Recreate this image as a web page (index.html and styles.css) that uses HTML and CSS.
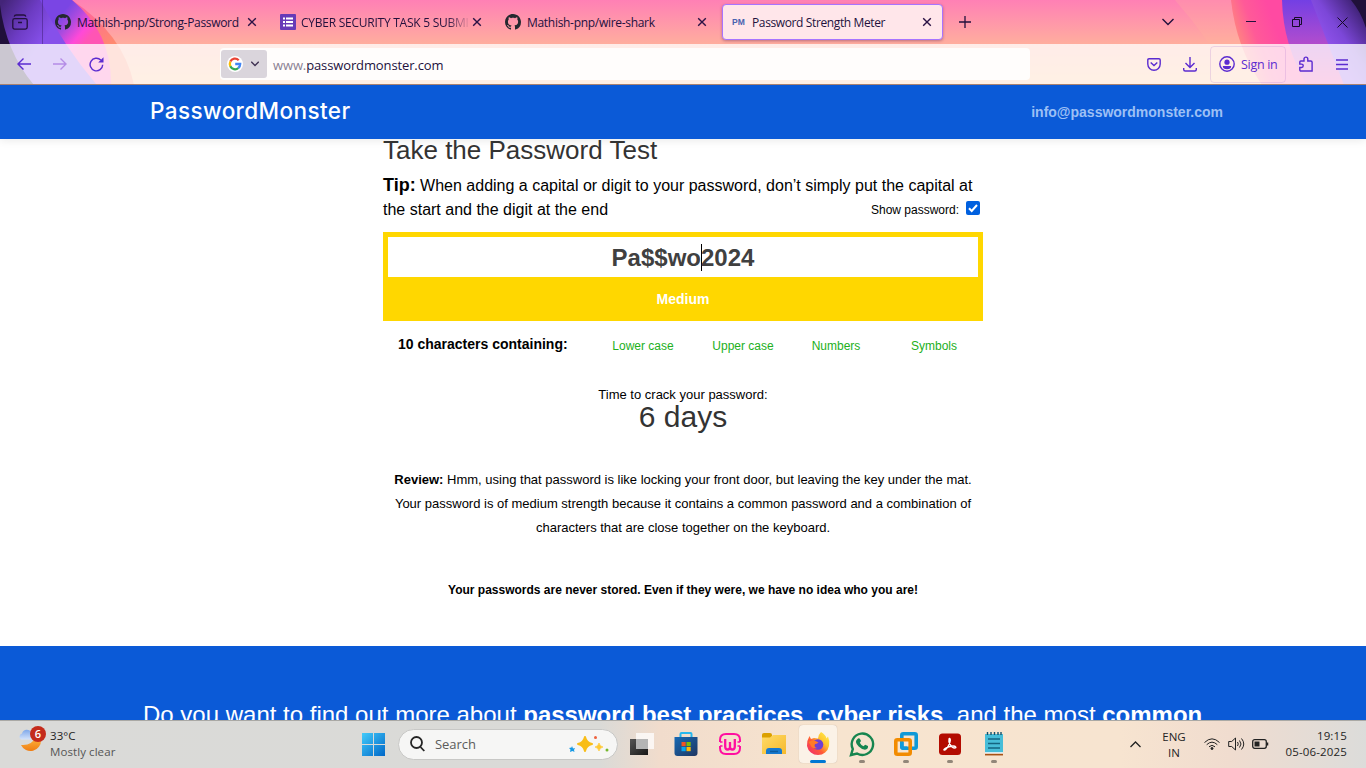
FILE: index.html
```html
<!DOCTYPE html>
<html lang="en">
<head>
<meta charset="utf-8">
<title>Password Strength Meter</title>
<link rel="stylesheet" href="styles.css">
</head>
<body>
<svg width="0" height="0" class="defs">
  <symbol id="github" viewBox="0 0 16 16"><path fill="#24292f" fill-rule="evenodd" d="M8 0C3.58 0 0 3.58 0 8c0 3.54 2.29 6.53 5.47 7.59.4.07.55-.17.55-.38 0-.19-.01-.82-.01-1.49-2.01.37-2.53-.49-2.69-.94-.09-.23-.48-.94-.82-1.13-.28-.15-.68-.52-.01-.53.63-.01 1.08.58 1.23.82.72 1.21 1.87.87 2.33.66.07-.52.28-.87.51-1.07-1.78-.2-3.64-.89-3.64-3.95 0-.87.31-1.59.82-2.15-.08-.2-.36-1.02.08-2.12 0 0 .67-.21 2.2.82.64-.18 1.32-.27 2-.27s1.36.09 2 .27c1.53-1.04 2.2-.82 2.2-.82.44 1.1.16 1.92.08 2.12.51.56.82 1.27.82 2.15 0 3.07-1.87 3.75-3.65 3.95.29.25.54.73.54 1.48 0 1.07-.01 1.93-.01 2.2 0 .21.15.46.55.38A8.01 8.01 0 0 0 16 8c0-4.42-3.58-8-8-8z"/></symbol>
  <symbol id="close" viewBox="0 0 10 10"><path d="M1.2 1.2l7.6 7.6M8.8 1.2L1.2 8.8" stroke="#2b1245" stroke-width="1.4" fill="none"/></symbol>
</svg>

<header class="browser">
  <svg class="theme" width="1366" height="84" viewBox="0 0 1366 84">
    <defs>
      <linearGradient id="sky" x1="0" y1="0" x2="0" y2="1"><stop offset="0" stop-color="#ff80b5"/><stop offset=".52" stop-color="#ffae9e"/><stop offset="1" stop-color="#ffc08c"/></linearGradient>
      <linearGradient id="violet" gradientUnits="userSpaceOnUse" x1="4" y1="0" x2="50" y2="30"><stop offset="0" stop-color="#432478"/><stop offset=".55" stop-color="#6d3cc4"/><stop offset="1" stop-color="#8650ea"/></linearGradient>
      <linearGradient id="magenta" gradientUnits="userSpaceOnUse" x1="56" y1="20" x2="84" y2="44"><stop offset="0" stop-color="#7a45e4"/><stop offset=".35" stop-color="#ab4bdf"/><stop offset=".75" stop-color="#ff49d8"/><stop offset="1" stop-color="#ff55b4"/></linearGradient>
      <linearGradient id="coral" gradientUnits="userSpaceOnUse" x1="75" y1="0" x2="112" y2="46"><stop offset="0" stop-color="#ff5aa6"/><stop offset="1" stop-color="#ff8b6e"/></linearGradient>
      <linearGradient id="rpink" gradientUnits="userSpaceOnUse" x1="1234" y1="40" x2="1275" y2="25"><stop offset="0" stop-color="#ff8c7c"/><stop offset=".5" stop-color="#ff5a98"/><stop offset="1" stop-color="#ff4aa2"/></linearGradient>
      <linearGradient id="rviolet" gradientUnits="userSpaceOnUse" x1="1300" y1="0" x2="1300" y2="85"><stop offset="0" stop-color="#733fe4"/><stop offset=".45" stop-color="#a94bd1"/><stop offset="1" stop-color="#f04ca7"/></linearGradient>
      <linearGradient id="rdark" gradientUnits="userSpaceOnUse" x1="1325" y1="42" x2="1362" y2="16"><stop offset="0" stop-color="#8f52ea"/><stop offset=".4" stop-color="#7c47d8"/><stop offset="1" stop-color="#43247c"/></linearGradient>
    </defs>
    <rect width="1366" height="85" fill="url(#sky)"/>
    <path d="M0 0H72Q124 35 134 85H0z" fill="url(#coral)"/>
    <path d="M0 0H72Q112 33 111 85H0z" fill="url(#magenta)"/>
    <path d="M0 0H40Q65 48 97 85H0z" fill="url(#violet)"/>
    <path d="M0 5Q6 52 34 85H0z" fill="#20103a"/>
    <path d="M1175 0H1231Q1238 50 1262 85H1235Q1210 40 1175 0z" fill="#ffb49b" opacity=".25"/>
    <path d="M1231 0Q1236 47 1262 85H1366V0z" fill="url(#rpink)"/>
    <path d="M1282 0Q1283 45 1307 85H1366V0z" fill="url(#rviolet)"/>
    <path d="M1311 0L1344 85H1366V0z" fill="url(#rdark)"/>
    <path d="M1351 0Q1361 12 1366 28V0z" fill="#20103a"/>
  </svg>
  <div class="tabs">
    <div class="view"><svg width="16" height="16" viewBox="0 0 16 16" fill="none" stroke="#23113d" stroke-width="1.3"><rect x=".8" y="4.7" width="14.4" height="10.4" rx="1.8"/><path d="M2.2 2.7Q2.5 1 4.3 1h7.4q1.8 0 2.1 1.7M6 8.5h4"/></svg></div>
    <div class="tab t1"><svg width="16" height="16"><use href="#github"/></svg><span class="s1">Mathish-pnp/Strong-Password</span><svg class="x" width="10" height="10"><use href="#close"/></svg></div>
    <div class="tab t2"><svg width="16" height="16" viewBox="0 0 16 16"><rect width="16" height="16" rx="1" fill="#673ab7"/><path d="M3 4.5h2M3 8h2M3 11.500h2M6 4.500h7M6 8h7M6 11.500h7" stroke="#fff" stroke-width="2"/></svg><span class="s2">CYBER SECURITY TASK 5 SUBMI</span><svg class="x" width="10" height="10"><use href="#close"/></svg></div>
    <div class="tab t3"><svg width="16" height="16"><use href="#github"/></svg><span class="s3">Mathish-pnp/wire-shark</span><svg class="x" width="10" height="10"><use href="#close"/></svg></div>
    <div class="tab active"><b>PM</b><span class="s4">Password Strength Meter</span><svg class="x" width="10" height="10"><use href="#close"/></svg></div>
    <svg class="plus" width="12" height="12" viewBox="0 0 12 12"><path d="M6 0v12M0 6h12" stroke="#23113d" stroke-width="1.3"/></svg>
    <div class="win">
      <svg width="12" height="8" viewBox="0 0 12 8"><path d="M.5 1L6 6.500 11.500 1" fill="none" stroke="#23113d" stroke-width="1.4"/></svg>
      <svg width="10" height="10" viewBox="0 0 10 10"><path d="M0 4.500h10" stroke="#23113d"/></svg>
      <svg width="10" height="10" viewBox="0 0 10 10" fill="none" stroke="#150a26"><path d="M.5 2.500h7v7h-7zM2.500 2.500v-2h7v7h-2"/></svg>
      <svg width="11" height="11" viewBox="0 0 11 11"><path d="M.5.5l10 10M10.500.5l-10 10" stroke="#150a26"/></svg>
    </div>
  </div>
  <div class="toolbar">
    <svg class="back" width="14" height="12" viewBox="0 0 14 12"><path d="M14 6H1M6.500.6L1 6l5.500 5.400" fill="none" stroke="#5b2bd0" stroke-width="1.4"/></svg>
    <svg class="fwd" width="14" height="12" viewBox="0 0 14 12"><path d="M0 6h13M7.500.6L13 6l-5.500 5.400" fill="none" stroke="#b58ce6" stroke-width="1.4"/></svg>
    <svg class="reload" width="15" height="15" viewBox="0 0 15 15"><path d="M13.700 7.800A6.300 6.300 0 1 1 11.800 3" fill="none" stroke="#5b2bd0" stroke-width="1.4"/><path d="M14.500.2v5.300H9.200z" fill="#5b2bd0"/></svg>
    <div class="url">
      <div class="engine">
        <svg width="16" height="16" viewBox="0 0 16 16"><circle cx="8" cy="8" r="8" fill="#fff"/><g fill="none" stroke-width="2.300"><path d="M3.300 5.600A5.200 5.200 0 0 1 11.700 4.200" stroke="#ea4335"/><path d="M3.400 10.400A5.200 5.200 0 0 1 3.400 5.600" stroke="#fbbc05"/><path d="M11.400 12A5.200 5.200 0 0 1 3.300 10.300" stroke="#34a853"/><path d="M8.200 8h5A5.200 5.200 0 0 1 11.300 12" stroke="#4285f4"/></g></svg>
        <svg width="8" height="6" viewBox="0 0 8 6"><path d="M.3.8L4 4.500 7.700.8" fill="none" stroke="#3f3152" stroke-width="1.300"/></svg>
      </div>
      <span class="address"><i>www.</i>passwordmonster.com</span>
    </div>
    <div class="tools">
      <svg width="14" height="13" viewBox="0 0 14 13" fill="none" stroke="#5b2bd0" stroke-width="1.400"><path d="M2 .8h10q1.200 0 1.200 1.200v4A6.200 6.200 0 0 1 .8 6V2Q.8.8 2 .8z"/><path d="M3.700 4.500L7 7.500l3.300-3"/></svg>
      <svg width="14" height="15" viewBox="0 0 14 15" fill="none" stroke="#5b2bd0" stroke-width="1.400"><path d="M7 0v10.500M2.500 6L7 10.500 11.500 6M.7 11v1.500q0 1.500 1.500 1.500h9.600q1.500 0 1.500-1.500V11"/></svg>
      <div class="signin"><svg width="16" height="16" viewBox="0 0 16 16"><circle cx="8" cy="8" r="7.200" fill="none" stroke="#5b2bd0" stroke-width="1.400"/><circle cx="8" cy="6.200" r="2.600" fill="#5b2bd0"/><path d="M3.800 10h8.400q0 3.200-4.200 3.200T3.800 10z" fill="#5b2bd0"/></svg><span>Sign in</span></div>
      <svg width="14" height="16" viewBox="0 0 14 16"><path d="M1.800 5H5V3a1.900 1.900 0 0 1 3.800 0v2h3q1.300 0 1.300 1.300V15H2q-1.200 0-1.200-1.200V11.500h1.700a1.700 1.700 0 0 0 0-3.400H.8V6q0-1 1-1z" fill="none" stroke="#5b2bd0" stroke-width="1.400"/></svg>
      <svg width="12" height="11" viewBox="0 0 12 11"><path d="M0 1h12M0 5.500h12M0 10h12" stroke="#5b2bd0" stroke-width="1.300"/></svg>
    </div>
  </div>
</header>

<div class="page">
  <div class="sitebar"><div class="logo">PasswordMonster</div><div class="mail">info@passwordmonster.com</div></div>
  <main>
    <h1>Take the Password Test</h1>
    <div class="tip"><div><b>Tip:</b> When adding a capital or digit to your password, don’t simply put the capital at</div>
      <div class="tip2"><span>the start and the digit at the end</span><label>Show password:<svg width="14" height="14" viewBox="0 0 14 14"><rect width="14" height="14" rx="2" fill="#0060df"/><path d="M3 7.200l2.700 2.800L11 4" fill="none" stroke="#fff" stroke-width="2"/></svg></label></div></div>
    <div class="meter"><div class="field">Pa$$wo<span class="caret"></span>2024</div><div class="grade">Medium</div></div>
    <div class="chars"><b>10 characters containing:</b><span>Lower case</span><span>Upper case</span><span>Numbers</span><span>Symbols</span></div>
    <div class="label">Time to crack your password:</div>
    <div class="time">6 days</div>
    <div class="review"><div><b>Review:</b> Hmm, using that password is like locking your front door, but leaving the key under the mat.</div><div>Your password is of medium strength because it contains a common password and a combination of</div><div>characters that are close together on the keyboard.</div></div>
    <div class="never">Your passwords are never stored. Even if they were, we have no idea who you are!</div>
  </main>
  <section class="more"><p>Do you want to find out more about <b>password best practices</b>, <b>cyber risks</b>, and the most <b>common</b></p></section>
</div>

<footer class="taskbar">
  <div class="weather">
    <svg width="30" height="30" viewBox="0 0 30 30"><defs><linearGradient id="moon" x1="0" y1="0" x2="0" y2="1"><stop offset="0" stop-color="#ffb73f"/><stop offset="1" stop-color="#ef7d13"/></linearGradient><linearGradient id="cloud" x1="0" y1="0" x2="0" y2="1"><stop offset="0" stop-color="#7fa8ea"/><stop offset="1" stop-color="#d4e3fb"/></linearGradient></defs><path d="M3 20Q14 21 17 12l6 3a10.500 10.500 0 0 1-20 5z" fill="url(#moon)"/><path d="M3 14.500a3.300 3.300 0 0 1 1-6A5 5 0 0 1 13 7v7.500z" fill="url(#cloud)"/><circle cx="20" cy="9" r="8" fill="#c42b1c"/><text x="20" y="13" text-anchor="middle" class="badge">6</text></svg>
    <div><span>33°C</span><span class="dim">Mostly clear</span></div>
  </div>
  <div class="dock">
    <svg class="start" width="23" height="23" viewBox="0 0 23 23"><defs><linearGradient id="winb" x1="0" y1="0" x2="1" y2="1"><stop offset="0" stop-color="#43cbfa"/><stop offset="1" stop-color="#0067c8"/></linearGradient></defs><path d="M0 0h11v11H0zM12 0h11v11H12zM0 12h11v11H0zM12 12h11v11H12z" fill="url(#winb)"/></svg>
    <div class="search">
      <svg width="15" height="16" viewBox="0 0 15 16" fill="none" stroke="#252525" stroke-width="1.800"><circle cx="6.500" cy="6.500" r="5.500"/><path d="M10.500 11l3.800 4"/></svg><span>Search</span>
      <svg class="spark" width="40" height="17" viewBox="0 0 40 17"><path d="M16 1q1.500 6 7 7-5.500 1-7 7-1.500-6-7-7 5.500-1 7-7z" fill="#f8bd18" stroke="#f8bd18" stroke-width="2" stroke-linejoin="round"/><path d="M30 7q.8 3.500 4 4-3.200.7-4 4-.8-3.300-4-4 3.200-.5 4-4z" fill="#ffc934" stroke="#ffc934" stroke-width=".7"/><path d="M3 10l1 2.500 2-.5-1 2 .5 2-2-1L1 16l.5-2.500L0 12l2.500-.5z" fill="#1599e5"/><circle cx="26.500" cy="1.500" r="1.500" fill="#ee613e"/><circle cx="38" cy="14" r="1.500" fill="#75b82e"/></svg>
    </div>
    <div class="app"><svg width="28" height="28" viewBox="0 0 28 28"><defs><linearGradient id="tv" x1="0" y1="0" x2="1" y2="1"><stop offset="0" stop-color="#555"/><stop offset="1" stop-color="#171717"/></linearGradient></defs><path d="M2 9h18v16H2z" fill="url(#tv)"/><path d="M8 3h18v16H8z" fill="#fff" opacity=".75"/><path d="M8 9h12v10H8z" fill="#b4b4b4"/></svg></div>
    <div class="app"><svg width="28" height="28" viewBox="0 0 28 28"><defs><linearGradient id="bag" x1="0" y1="0" x2="1" y2="1"><stop offset="0" stop-color="#1669b5"/><stop offset="1" stop-color="#203660"/></linearGradient></defs><path d="M8.500 8V4q0-1 1-1h9q1 0 1 1v4" stroke="#27b7ed" stroke-width="2" fill="none"/><path d="M2.500 7h23v16q0 3-3 3h-17q-3 0-3-3z" fill="url(#bag)"/><path d="M9.500 12h4.200v4.200H9.500z" fill="#f15322"/><path d="M14.500 12h4.200v4.200h-4.200z" fill="#7fbb08"/><path d="M9.500 17h4.200v4.200H9.500z" fill="#06a6f0"/><path d="M14.500 17h4.200v4.200h-4.200z" fill="#ffba08"/></svg></div>
    <div class="app"><svg width="28" height="28" viewBox="0 0 28 28" fill="none" stroke="#ff0fa0" stroke-width="2"><path d="M4 12V10Q4 4 10 4h8q6 0 6 6v2M4 16v2q0 6 6 6h8q6 0 6-6v-2"/><path d="M4 12h2.500M21.500 12H24M4 16h2.500M21.500 16H24" stroke-width="1.600"/><path d="M9.200 9v7.500q0 3 2.400 3t2.400-2.500V12M14 17q0 2.500 2.400 2.500t2.400-3V9" stroke-width="2.300"/></svg></div>
    <div class="app"><svg width="28" height="28" viewBox="0 0 28 28"><defs><linearGradient id="folder" x1="0" y1="0" x2="1" y2="1"><stop offset="0" stop-color="#ffdb67"/><stop offset="1" stop-color="#f6b92c"/></linearGradient></defs><path d="M2 4.500q0-1.500 2-1.500h6q2 0 2 2v4H2z" fill="#dba000"/><path d="M2 7.500h8l3-2.500h13v19H2z" fill="url(#folder)"/><path d="M6 24v-3q0-3 3-3h10q3 0 3 3v3z" fill="#1679cf"/><path d="M10 21.500h8" stroke="#0c5b9f" stroke-width="1.500"/></svg></div>
    <div class="app on"><svg width="28" height="28" viewBox="0 0 28 28"><defs><linearGradient id="fire" x1="1" y1="0" x2="0" y2="1"><stop offset="0" stop-color="#fff44f"/><stop offset=".35" stop-color="#ffc52f"/><stop offset=".6" stop-color="#ff5936"/><stop offset="1" stop-color="#ed2478"/></linearGradient></defs><path d="M17 2q5 3 5.500 6.500l1.500-2Q26 11 25 16A11.200 11.200 0 0 1 3 16q-.5-5 2.500-10L7 9l3-1q2 0 4 .5Q14 5 17 2z" fill="url(#fire)"/><circle cx="14" cy="14.500" r="5.300" fill="#7040d4"/><path d="M4.500 12q3-2.500 7-1l3 1.500q-2 1.500-3.500 1.500-1.500 3 2 4-5 1-6.500-3z" fill="#ff7a28"/></svg></div>
    <div class="app run"><svg width="28" height="28" viewBox="0 0 28 28"><path d="M3 25l1.800-6A10.700 10.700 0 1 1 9 23.500z" fill="none" stroke="#16854f" stroke-width="2.400"/><path d="M10 8.500q1.200-.8 2 .5l1 2-1.200 1.800q1.200 2.500 3.700 3.500l1.700-1.500 2.800 1.300q.5 3-3 3.600-3 0-6.300-3.200Q5.500 11.500 10 8.500z" fill="#16854f"/></svg></div>
    <div class="app run"><svg width="28" height="28" viewBox="0 0 28 28" fill="none" stroke-width="3.600"><rect x="9.800" y="3.800" width="14.400" height="14.400" rx="1.500" stroke="#0f99d7"/><rect x="3.800" y="9.800" width="14.400" height="14.400" rx="1.500" stroke="#f28b00"/><path d="M9.800 12V16q0 2.200 2.200 2.200h3" stroke="#0f99d7"/></svg></div>
    <div class="app run"><svg width="28" height="28" viewBox="0 0 28 28"><rect x="3" y="3.500" width="22" height="21.500" rx="3.500" fill="#b30b00"/><path d="M8 20c-1-1 5-4 9-4 3 0 4 2 1.500 2-3 0-6.500-6-5.500-9 .5-1.500 2 0 1 3-1.200 4-4.500 9-6 8z" fill="none" stroke="#fff" stroke-width="1.300"/></svg></div>
    <div class="app run"><svg width="28" height="28" viewBox="0 0 28 28"><path d="M5 4h18v19H5z" fill="#47bdd8"/><path d="M7.500 2v3M11 2v3M14.500 2v3M18 2v3M21 2v3" stroke="#14516a" stroke-width="1.400"/><path d="M8 9h12M8 13.500h12M8 18h12" stroke="#146480" stroke-width="1.500"/><path d="M5 23h18" stroke="#fff" stroke-width="1.500"/><path d="M5 24.600h18" stroke="#a75215" stroke-width="1.700"/></svg></div>
  </div>
  <div class="tray">
    <svg class="up" width="11" height="7" viewBox="0 0 11 7"><path d="M.5 6l5-5 5 5" fill="none" stroke="#222" stroke-width="1.300"/></svg>
    <div class="lang"><span>ENG</span><span>IN</span></div>
    <svg class="wifi" width="16" height="12" viewBox="0 0 16 12" fill="none" stroke="#222"><path d="M.5 4.500q7.500-7.300 15 0M2.700 6.700q5.300-5.100 10.600 0M5 8.800q3-2.900 6 0"/><circle cx="8" cy="10.500" r="1" fill="#222"/></svg>
    <svg class="sound" width="17" height="14" viewBox="0 0 17 14" fill="none" stroke="#222"><path d="M.7 4.500h3L7.500 1v12L3.700 9.500h-3zM9.500 5q1.500 2 0 4M11.500 3.500q3 3.500 0 7M13.500 1.500q4.500 5.500 0 11"/></svg>
    <svg class="batt" width="17" height="10" viewBox="0 0 17 10"><rect x=".7" y=".7" width="13.600" height="8.600" rx="2" fill="none" stroke="#222" stroke-width="1.300"/><rect x="2.500" y="2.500" width="5" height="5" fill="#222"/><path d="M15.500 3.500v3" stroke="#222" stroke-width="1.500"/></svg>
    <div class="clock"><span>19:15</span><span>05-06-2025</span></div>
  </div>
</footer>
</body>
</html>
```
FILE: styles.css
```css
* { box-sizing: border-box; }
body { margin: 0; width: 1366px; height: 768px; overflow: hidden; display: flex; flex-direction: column; background: #fff; font-family: "Liberation Sans", Arial, sans-serif; color: #000; }
svg { display: block; flex: none; }
span, b, label { white-space: nowrap; }
.defs { position: absolute; }
.browser { height: 85px; flex: none; position: relative; border-bottom: 1px solid #a88272; font-family: "Open Sans", "Noto Sans", sans-serif; color: #23113d; }
.theme { position: absolute; top: 0; left: 0; }
.tabs { position: relative; height: 44px; display: flex; align-items: center; font-size: 12px; }
.view { width: 43px; height: 44px; padding: 14px 0 0 12px; border-right: 1px solid rgba(45, 18, 90, .4); flex: none; }
.tab { display: flex; align-items: center; flex: none; height: 36px; padding-left: 12px; width: 225px; }
.tab span { margin-left: 6px; width: 164px; padding-top: 1px; }
.tab .x { margin-left: 6px; }
.t2 .s2 { -webkit-mask-image: linear-gradient(90deg, #000 145px, transparent 170px); mask-image: linear-gradient(90deg, #000 145px, transparent 170px); width: 169px; margin-left: 5px; }
.t2 .x { margin-left: 2px; }
.t3 .x { margin-left: 14px; }
.t3 { width: 229px; }
.t3 .s3 { width: 156px; }
.s1 { letter-spacing: -.32px; }
.s2 { letter-spacing: -.25px; }
.s3 { letter-spacing: -.3px; }
.s4 { letter-spacing: -.38px; }
.tab.active { width: 221px; background: #ffe6ea; border: 1px solid #a774ff; border-radius: 4px; box-shadow: 0 1px 3px rgba(90, 30, 80, .4); padding-left: 9px; }
.active b { font: bold 8.5px "Liberation Sans", sans-serif; color: #4963b0; width: 14px; }
.active .s4 { margin-left: 6px; }
.plus { margin-left: 16px; }
.win { margin-left: auto; display: flex; align-items: center; padding-right: 18px; }
.win svg:nth-child(2) { margin-left: 72px; }
.win svg:nth-child(3) { margin-left: 36px; }
.win svg:nth-child(4) { margin-left: 35px; }
.toolbar { position: relative; height: 40px; background: rgba(255, 255, 255, .77); display: flex; align-items: center; }
.back { margin-left: 17px; }
.fwd { margin-left: 22px; }
.reload { margin-left: 22px; }
.url { margin-left: 116px; width: 810px; height: 32px; background: rgba(255, 255, 255, .87); border-radius: 4px; display: flex; align-items: center; padding-left: 1px; font-size: 13px; }
.engine { width: 46px; height: 28px; border-radius: 3px; background: #dad5dc; display: flex; align-items: center; gap: 8px; padding-left: 6px; }
.address { margin-left: 6px; letter-spacing: -.12px; padding-top: 1px; }
.address i { font-style: normal; color: #8b8193; }
.tools { display: flex; align-items: center; margin-left: 117px; }
.tools > svg:nth-child(2) { margin-left: 22px; }
.signin { margin-left: 13px; width: 76px; height: 37px; border: 1px solid rgba(160, 100, 200, .2); border-radius: 4px; display: flex; align-items: center; padding-left: 8px; gap: 6px; color: #5b2bd0; font-size: 12.5px; letter-spacing: -.3px; }
.tools > svg:nth-child(4) { margin-left: 13px; }
.tools > svg:nth-child(5) { margin-left: 23px; }
.page { height: 635px; flex: none; overflow: hidden; display: flex; flex-direction: column; }
.sitebar { height: 54px; flex: none; background: #0b5ad7; box-shadow: 0 2px 8px rgba(0, 0, 0, .08); display: flex; justify-content: space-between; align-items: center; padding: 0 143px 0 150px; }
.logo { color: #fff; font: 500 22.5px Inter, sans-serif; letter-spacing: .4px; padding-bottom: 4px; }
.mail { color: #9dc0f5; font-size: 14px; font-weight: bold; }
main { width: 600px; height: 507px; flex: none; margin-left: 383px; }
h1 { margin: 0; height: 34px; font-weight: normal; font-size: 26px; line-height: 22px; color: #333; }
.tip { font-size: 16px; line-height: 24px; height: 59px; }
.tip b { font-size: 18px; }
.tip2 { display: flex; justify-content: space-between; padding-right: 3px; }
.tip2 label { font-size: 12px; display: flex; gap: 7px; height: 24px; }
.tip2 label svg { margin-top: 3px; }
.meter { height: 89px; background: gold; padding: 5px; text-align: center; font-weight: bold; }
.field { background: #fff; height: 40px; line-height: 42px; font-size: 24px; color: #404040; }
.caret { display: inline-block; width: 1px; height: 27px; background: #000; margin-right: -1px; vertical-align: -5px; }
.grade { color: #fff; font-size: 14px; line-height: 44px; }
.chars { display: flex; height: 65px; line-height: 50px; font-size: 12px; color: #22b01c; padding-left: 15px; }
.chars b { color: #000; font-size: 14px; width: 195px; line-height: 47px; flex: none; }
.chars span { width: 100px; text-align: center; flex: none; }
.chars span:nth-of-type(n+3) { margin-left: -7px; margin-right: 5px; }
.label { font-size: 13px; line-height: 18px; text-align: center; }
.time { font-size: 30px; line-height: 26px; text-align: center; color: #333; }
.review { margin-top: 38px; font-size: 13px; line-height: 24px; text-align: center; white-space: nowrap; }
.never { margin-top: 38px; font-size: 12px; line-height: 24px; text-align: center; font-weight: bold; }
.more { flex: 1; background: #0b5ad7; color: #fff; }
.more p { margin: 0; padding: 51px 0 0 143px; font-size: 24px; line-height: 36px; white-space: nowrap; }
.taskbar { height: 48px; flex: none; border-top: 1px solid #aaa9a5; background: linear-gradient(90deg, #dadad8 0, #dadad7 600px, #f1dccc 660px, #f7e4cf 820px, #f7e4d0 1120px, #f0dccf 1230px, #dcdcda 1366px); display: flex; font-family: "Open Sans", "Noto Sans", sans-serif; font-size: 11.5px; color: #242424; }
.weather { width: 362px; display: flex; padding: 4px 0 0 18px; gap: 2px; }
.weather div, .lang, .clock { display: flex; flex-direction: column; line-height: 16px; }
.weather div { padding-top: 3px; letter-spacing: .08px; }
.dim { color: #555; }
.badge { font: 600 11px "Open Sans", sans-serif; fill: #fff; }
.dock { display: flex; align-items: center; width: 766px; padding-bottom: 1px; }
.search { margin: 0 2px 0 13px; width: 220px; height: 31px; border: 1px solid #c8c8c6; border-radius: 16px; background: #f6f6f5; display: flex; align-items: center; padding-left: 11px; font-size: 13px; color: #5b5b5b; flex: none; }
.search span { margin-left: 10px; letter-spacing: -.05px; }
.spark { margin-left: auto; margin-right: 8px; }
.app { width: 38px; height: 38px; margin: 0 3px; border-radius: 4px; display: flex; align-items: center; justify-content: center; position: relative; flex: none; }
.on { background: #fbf2e7; box-shadow: 0 0 1px #b9a99b; }
.on::after, .run::after { content: ""; position: absolute; bottom: 0; width: 16px; height: 3px; border-radius: 2px; background: #0078d4; }
.run::after { width: 6px; background: #928679; }
.tray { display: flex; align-items: center; width: 238px; padding-bottom: 1px; }
.up { margin-left: 2px; }
.lang { margin-left: 20px; width: 26px; text-align: center; padding-top: 1px; }
.wifi { margin-left: 17px; }
.sound { margin-left: 8px; }
.batt { margin-left: 7px; }
.clock { margin-left: auto; margin-right: 19px; text-align: right; letter-spacing: .15px; }
```
